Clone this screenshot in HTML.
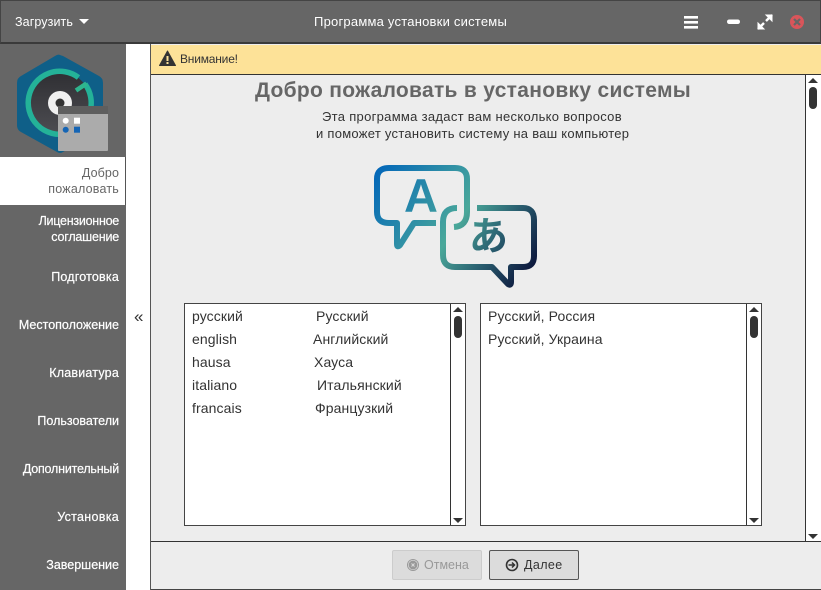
<!DOCTYPE html>
<html><head><meta charset="utf-8">
<style>
html,body{margin:0;padding:0;width:821px;height:590px;overflow:hidden;background:#ededed}
body{position:relative;font-family:"Liberation Sans","DejaVu Sans",sans-serif;font-size:13px;color:#333}
.a{position:absolute}
.t{position:absolute;white-space:nowrap;line-height:16px}
.s{color:#fff;text-align:right;right:702px;font-size:12.5px;-webkit-text-stroke:.2px #fff}
.l{font-size:14px;color:#333;letter-spacing:.1px}
.sb{position:absolute;background:#fff;border-left:1px solid #333}
.up{position:absolute;width:0;height:0;border-left:5px solid transparent;border-right:5px solid transparent;border-bottom:5px solid #333}
.dn{position:absolute;width:0;height:0;border-left:5px solid transparent;border-right:5px solid transparent;border-top:5px solid #333}
.th{position:absolute;width:8px;height:22px;border-radius:4px;background:#333}
.box{position:absolute;background:#fff;border:1px solid #444;box-sizing:border-box}
</style></head><body>
<!-- header -->
<div class="a" style="left:0;top:0;width:821px;height:44px;background:#666;border:1px solid #444;border-bottom:2px solid #3a3a3a;box-sizing:border-box"></div>
<span class="t" style="left:15px;top:14px;color:#fff;font-size:12.5px;letter-spacing:.1px">Загрузить</span>
<div class="a" style="left:79px;top:19px;width:0;height:0;border-left:5px solid transparent;border-right:5px solid transparent;border-top:5px solid #fff"></div>
<span class="t" style="left:314px;top:14px;color:#fff;font-size:13px;letter-spacing:.22px">Программа установки системы</span>
<svg class="a" style="left:680px;top:10px" width="130" height="24" viewBox="0 0 130 24">
<rect x="4" y="6" width="14" height="2.600" fill="#fff"/><rect x="4" y="11" width="14" height="2.600" fill="#fff"/><rect x="4" y="16" width="14" height="2.600" fill="#fff"/>
<rect x="47" y="9.500" width="13" height="4.500" rx="2.200" fill="#fff"/>
<path d="M78 19l6-6M86 11l6-6" stroke="#fff" stroke-width="2.400"/>
<path d="M78 19v-6l6 6zM92 5v6l-6-6z" fill="#fff" stroke="#fff"/>
<circle cx="117" cy="12" r="7" fill="#d9555a"/>
<path d="M114 9l6 6M120 9l-6 6" stroke="#666" stroke-width="2.200"/>
</svg>
<!-- sidebar -->
<div class="a" style="left:0;top:44px;width:126px;height:546px;background:#666"></div>
<div class="a" style="left:0;top:157px;width:125px;height:48px;background:#fff"></div>
<div class="a" style="left:125px;top:157px;width:1px;height:48px;background:#555"></div>
<div class="a" style="left:126px;top:44px;width:25px;height:546px;background:#fff"></div>
<svg class="a" style="left:15px;top:52px" width="96" height="102" viewBox="0 0 96 102">
<defs><linearGradient id="r" x1="0" y1="0" x2="0" y2="1"><stop offset="0" stop-color="#2fb58e"/><stop offset="1" stop-color="#1aa9a0"/></linearGradient>
<linearGradient id="d" x1="0" y1="0" x2="0" y2="1"><stop offset="0" stop-color="#2f2f33"/><stop offset="1" stop-color="#4d4d52"/></linearGradient></defs>
<path d="M45 3Q45 3 48 4L84 24Q88 26 88 31V73Q88 78 84 80L48 100Q45 102 42 100L6 80Q2 78 2 73V31Q2 26 6 24L40 4Q43 2 45 3Z" fill="#0f5f88"/>
<circle cx="45" cy="51" r="31" fill="url(#d)"/>
<path d="M63.500 25.500A31.500 31.500 0 1 0 70 32" fill="none" stroke="#24b298" stroke-width="5.500"/>
<path d="M71.500 31.500L61 38.500" fill="none" stroke="#2fb58e" stroke-width="4.500"/>
<circle cx="45" cy="51" r="12" fill="#f0f0f0"/><circle cx="45" cy="51" r="4.500" fill="#333"/>
<rect x="43" y="54" width="50" height="45" fill="#ababab" rx="1"/>
<rect x="43" y="54" width="50" height="8" fill="#5e5e5e"/>
<circle cx="50.700" cy="68.700" r="3" fill="#fff"/><rect x="59" y="65.700" width="6" height="6" fill="#fff"/>
<circle cx="50.700" cy="77.700" r="3" fill="#1565b5"/><rect x="59" y="74.700" width="6" height="6" fill="#1565b5"/>
</svg>
<span class="t" style="right:702px;top:165px;color:#666;font-size:12.5px;letter-spacing:.1px">Добро</span>
<span class="t" style="right:702px;top:181px;color:#666;font-size:12.5px;letter-spacing:.2px">пожаловать</span>
<span class="t s" style="top:213px;letter-spacing:-.25px">Лицензионное</span>
<span class="t s" style="top:229px;letter-spacing:-.2px">соглашение</span>
<span class="t s" style="top:269px;letter-spacing:.2px">Подготовка</span>
<span class="t s" style="top:317px">Местоположение</span>
<span class="t s" style="top:365px;letter-spacing:.2px">Клавиатура</span>
<span class="t s" style="top:413px">Пользователи</span>
<span class="t s" style="top:461px;letter-spacing:-.2px">Дополнительный</span>
<span class="t s" style="top:509px;letter-spacing:.3px">Установка</span>
<span class="t s" style="top:557px">Завершение</span>
<span class="t" style="left:134px;top:309px;font-size:17px;color:#333">«</span>
<!-- main -->
<div class="a" style="left:150px;top:44px;width:1px;height:546px;background:#555"></div>
<div class="a" style="left:151px;top:45px;width:670px;height:29px;background:#fde298"></div>
<div class="a" style="left:151px;top:74px;width:670px;height:1px;background:#333"></div>
<svg class="a" style="left:159px;top:50px" width="18" height="17" viewBox="0 0 18 17"><path d="M8.500 1L16.500 15.500H.5Z" fill="#333" stroke="#333" stroke-linejoin="round"/><rect x="7.500" y="6" width="2" height="5" fill="#fde298"/><rect x="7.500" y="12" width="2" height="2" fill="#fde298"/></svg>
<span class="t" style="left:180px;top:51px;font-size:12px;color:#333;letter-spacing:-.2px">Внимание!</span>
<span class="t" style="left:255px;top:77px;font-size:21px;line-height:27px;font-weight:bold;color:#666;letter-spacing:.3px">Добро пожаловать в установку системы</span>
<span class="t" style="left:322px;top:109px;font-size:13px;color:#333;letter-spacing:.3px">Эта программа задаст вам несколько вопросов</span>
<span class="t" style="left:316px;top:126px;font-size:13px;color:#333;letter-spacing:.27px">и поможет установить систему на ваш компьютер</span>
<svg class="a" style="left:370px;top:160px" width="172" height="132" viewBox="0 0 172 132">
<defs><linearGradient id="g" gradientUnits="userSpaceOnUse" x1="5" y1="15" x2="165" y2="120"><stop offset="0" stop-color="#0468b8"/><stop offset=".5" stop-color="#4aa89a"/><stop offset=".72" stop-color="#2a5f70"/><stop offset="1" stop-color="#070a33"/></linearGradient></defs>
<g fill="none" stroke="url(#g)" stroke-width="6" stroke-linejoin="round" stroke-linecap="butt">
<path d="M66 63H44L30 85Q27 88 27 84V63H19Q7 63 7 52V19Q7 8 19 8H85Q97 8 97 19V52Q97 66 84 67"/>
<path d="M87 48Q73 48 73 62V95Q73 107 85 107H122L138 124Q141 126 141 122V107H153Q164 107 164 96V60Q164 48 153 48H107"/>
</g>
<text x="34" y="52" font-family="Liberation Sans" font-weight="bold" font-size="47" fill="url(#g)">A</text>
<text x="99" y="90" font-family="Noto Sans CJK JP" font-weight="bold" font-size="39" fill="url(#g)">あ</text>
</svg>
<!-- lists -->
<div class="box" style="left:184px;top:303px;width:282px;height:223px"></div>
<div class="sb" style="left:450px;top:304px;width:14px;height:221px"></div>
<div class="up" style="left:453px;top:307px"></div><div class="th" style="left:454px;top:316px"></div><div class="dn" style="left:453px;top:518px"></div>
<span class="t l" style="left:192px;top:308px">русский</span><span class="t l" style="left:316px;top:308px">Русский</span>
<span class="t l" style="left:192px;top:331px">english</span><span class="t l" style="left:313px;top:331px">Английский</span>
<span class="t l" style="left:192px;top:354px">hausa</span><span class="t l" style="left:314px;top:354px">Хауса</span>
<span class="t l" style="left:192px;top:377px">italiano</span><span class="t l" style="left:317px;top:377px">Итальянский</span>
<span class="t l" style="left:192px;top:400px">francais</span><span class="t l" style="left:315px;top:400px">Французкий</span>
<div class="box" style="left:480px;top:303px;width:282px;height:223px"></div>
<div class="sb" style="left:746px;top:304px;width:14px;height:221px"></div>
<div class="up" style="left:749px;top:307px"></div><div class="th" style="left:750px;top:316px"></div><div class="dn" style="left:749px;top:518px"></div>
<span class="t l" style="left:488px;top:308px">Русский, Россия</span>
<span class="t l" style="left:488px;top:331px">Русский, Украина</span>
<!-- main scrollbar -->
<div class="sb" style="left:805px;top:75px;width:15px;height:466px"></div>
<div class="up" style="left:808px;top:78px"></div><div class="th" style="left:809px;top:87px"></div><div class="dn" style="left:808px;top:534px"></div>
<!-- footer -->
<div class="a" style="left:151px;top:541px;width:670px;height:1px;background:#333"></div>
<div class="a" style="left:151px;top:589px;width:670px;height:1px;background:#444"></div>
<div class="a" style="left:392px;top:550px;width:90px;height:30px;box-sizing:border-box;background:#dcdcdc;border:1px solid #ccc;border-radius:2px"></div>
<svg class="a" style="left:406px;top:558px" width="14" height="14" viewBox="0 0 14 14"><circle cx="7" cy="7" r="6" fill="#999"/><circle cx="7" cy="7" r="4.700" fill="none" stroke="#dcdcdc" stroke-width=".7"/><path d="M5.500 5.500l3 3M8.500 5.500l-3 3" stroke="#dcdcdc" stroke-width="1"/></svg>
<span class="t" style="left:424px;top:557px;font-size:12.500px;color:#999">Отмена</span>
<div class="a" style="left:489px;top:550px;width:90px;height:30px;box-sizing:border-box;background:#dcdcdc;border:1px solid #555;border-radius:2px"></div>
<svg class="a" style="left:505px;top:558px" width="14" height="14" viewBox="0 0 14 14"><circle cx="7" cy="7" r="5.500" fill="none" stroke="#333" stroke-width="1.600"/><path d="M3.500 7H9M7 4.500L9.500 7L7 9.500" fill="none" stroke="#333" stroke-width="1.500"/></svg>
<span class="t" style="left:524px;top:557px;font-size:12.500px;color:#333;letter-spacing:.4px">Далее</span>
</body></html>
